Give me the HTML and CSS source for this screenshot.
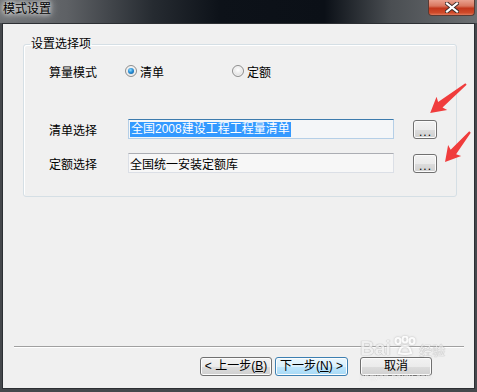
FILE: index.html
```html
<!DOCTYPE html>
<html lang="zh-CN">
<head>
    <meta charset="UTF-8">
    <title>模式设置</title>
    <link rel="stylesheet" href="styles.css">
</head>
<body>
<div class="window">
    <div class="titlebar">
        <span class="title">模式设置</span>
        <span class="close">
            <svg width="14" height="11" viewBox="0 0 14 11">
                <path d="M2 1.5 L12 9.5 M12 1.5 L2 9.5" stroke="#3a2a28" stroke-width="4" stroke-linecap="square"/>
                <path d="M2 1.5 L12 9.5 M12 1.5 L2 9.5" stroke="#ffffff" stroke-width="2.2" stroke-linecap="square"/>
            </svg>
        </span>
    </div>
    <div class="client">
        <fieldset class="group">
            <legend>设置选择项</legend>
            <div class="group-body">
                <div class="row mode-row">
                    <span class="label">算量模式</span>
                    <span class="radio checked"><i></i>清单</span>
                    <span class="radio"><i></i>定额</span>
                </div>
                <div class="row list-row">
                    <span class="label">清单选择</span>
                    <div class="field focus"><span class="sel">全国2008建设工程工程量清单</span></div>
                    <button class="browse">...</button>
                </div>
                <div class="row quota-row">
                    <span class="label">定额选择</span>
                    <div class="field">全国统一安装定额库</div>
                    <button class="browse">...</button>
                </div>
            </div>
        </fieldset>
        <div class="spacer"></div>
        <div class="sep"></div>
        <div class="buttons">
            <button class="btn">&lt; 上一步(<u>B</u>)</button>
            <button class="btn hot">下一步(<u>N</u>) &gt;</button>
            <button class="btn cancel">取消</button>
        </div>
    </div>

    <!-- 标注箭头 -->
    <svg class="arrows" width="477" height="392">
        <polygon transform="translate(466,84) rotate(141.1)" points="0,-1 33,-3.5 31,-8.5 46,0 31,8.5 33,3.5 0,1" fill="#f03c3c"/>
        <polygon transform="translate(470,132) rotate(129.8)" points="0,-1 26,-3.5 24,-8.5 39,0 24,8.5 26,3.5 0,1" fill="#f03c3c"/>
    </svg>

    <div class="watermark">
        <div class="wm-top">
            <span class="wm-bai">Bai</span>
            <svg class="wm-paw" width="26" height="20" viewBox="0 0 26 20">
                <g fill="none" stroke="#ffffff" stroke-width="2.2">
                    <ellipse cx="6" cy="5" rx="2.5" ry="3"/>
                    <ellipse cx="13" cy="3.5" rx="2.5" ry="3"/>
                    <ellipse cx="20" cy="5" rx="2.5" ry="3"/>
                    <path d="M7 17 Q8 10 13 10 Q18 10 19 17 Q13 19 7 17 Z"/>
                </g>
            </svg>
            <span class="wm-jy">经验</span>
        </div>
        <div class="wm-url">jingyan.baidu.com</div>
    </div>
</div>
</body>
</html>
```

FILE: styles.css
```css
*{
    margin: 0;
    padding: 0;
    box-sizing: border-box;
}
html,body{
    width: 100%;
    height: 100%;
}
body{
    font-family: "Liberation Sans", "Noto Sans CJK SC", sans-serif;
    font-size: 12px;
    color: #000;
}
.window{
    position: relative;
    width: 477px;
    height: 392px;
    background: #45484c;
    padding: 0 2px 3px 2px;
    display: flex;
    flex-direction: column;
    overflow: hidden;
}
.titlebar{
    height: 23px;
    margin: 0 -2px;
    display: flex;
    justify-content: space-between;
    align-items: flex-start;
    background: linear-gradient(to right, #717477 0%, #5e6165 14%, #262b31 32%, #0d1219 46%, #0b1017 68%, #4a4e52 82%, #6c6f72 100%);
}
.titlebar .title{
    padding: 2px 0 0 3px;
    line-height: 14px;
    color: #000;
    text-shadow: 0 0 4px #fff, 0 0 8px rgba(255,255,255,.8), 0 0 12px rgba(255,255,255,.5);
}
.titlebar .close{
    width: 47px;
    height: 16px;
    margin-right: 2px;
    border: 1px solid #5a3a33;
    border-top: none;
    border-radius: 0 0 4px 4px;
    background: linear-gradient(#e9a18f 0%, #d9775f 40%, #c2371c 55%, #cf4a2a 85%, #e0795b 100%);
    display: flex;
    justify-content: center;
    align-items: center;
}
.client{
    flex: 1;
    background: #f0f0f0;
    border: 1px solid #2c2f33;
    display: flex;
    flex-direction: column;
}
.group{
    margin: 13px 17px 0 20px;
    border: 1px solid #d5dfe5;
    border-radius: 3px;
    box-shadow: inset 1px 1px 0 #fff;
    padding: 0;
}
.group legend{
    margin-left: 6px;
    padding: 0 1px;
    line-height: 14px;
}
.group-body{
    padding: 10px 0 23px 25px;
}
.row{
    display: flex;
    align-items: center;
    height: 20px;
}
.list-row{
    margin-top: 38px;
}
.quota-row{
    margin-top: 14px;
}
.row .label{
    width: 79px;
    flex: none;
}
.mode-row .label{
    width: 76px;
}
.radio{
    display: flex;
    align-items: center;
    gap: 3px;
    width: 107px;
}
.radio i{
    width: 12px;
    height: 12px;
    border-radius: 50%;
    border: 1px solid #8f8f8f;
    background: radial-gradient(circle at 50% 40%, #ffffff 0%, #e9e9e9 50%, #cfcfcf 100%);
    box-shadow: inset 0 0 0 1px #f4f4f4;
    display: flex;
    justify-content: center;
    align-items: center;
}
.radio.checked i::after{
    content: "";
    width: 6px;
    height: 6px;
    border-radius: 50%;
    background: radial-gradient(circle at 40% 35%, #8fdcff 0%, #2a8fd6 45%, #0b4f8f 100%);
}
.field{
    width: 266px;
    height: 20px;
    background: #f7f7f7;
    border: 1px solid #dbdfe6;
    border-top-color: #abadb3;
    padding-left: 1px;
    display: flex;
    align-items: center;
    white-space: nowrap;
}
.field.focus{
    border-color: #b5cfe7;
    border-top-color: #3d7bad;
    background: #f4f6f8;
}
.field .sel{
    background: #3399ff;
    color: #fff;
    line-height: 15px;
    padding: 0 1px;
}
.browse{
    width: 24px;
    height: 19px;
    margin-left: 19px;
    border: 1px solid #707070;
    border-radius: 3px;
    background: linear-gradient(#f2f2f2 0%, #ebebeb 50%, #dddddd 50%, #cfcfcf 100%);
    box-shadow: inset 0 0 0 1px #fcfcfc;
    font-family: "Liberation Sans", sans-serif;
    font-size: 12px;
    letter-spacing: 1px;
    line-height: 22px;
    padding-left: 1px;
}
.spacer{
    flex: 1;
}
.sep{
    margin: 0 10px 0 11px;
    border-top: 1px solid #a0a0a0;
    border-bottom: 1px solid #fff;
}
.buttons{
    display: flex;
    justify-content: flex-end;
    gap: 3px;
    margin: 9px 42px 12px 0;
}
.btn{
    width: 72px;
    height: 19px;
    border: 1px solid #707070;
    border-radius: 3px;
    background: linear-gradient(#f2f2f2 0%, #ebebeb 50%, #dddddd 50%, #cfcfcf 100%);
    box-shadow: inset 0 0 0 1px #fcfcfc;
    font-family: "Liberation Sans", "Noto Sans CJK SC", sans-serif;
    font-size: 12px;
    line-height: 15px;
    color: #000;
}
.btn.hot{
    width: 73px;
    border-color: #3c7fb1;
    background: linear-gradient(#eaf6fd 0%, #d9f0fc 50%, #bee6fd 50%, #a7d9f5 100%);
}
.btn.cancel{
    margin-left: 9px;
}
.btn u{
    text-decoration: underline;
}
.arrows{
    position: absolute;
    left: 0;
    top: 0;
    pointer-events: none;
}
.watermark{
    position: absolute;
    left: 360px;
    top: 336px;
    width: 90px;
    color: rgba(255,255,255,.85);
    pointer-events: none;
    opacity: .75;
}
.wm-top{
    display: flex;
    align-items: flex-end;
    height: 22px;
}
.wm-bai{
    font-family: "Liberation Sans", sans-serif;
    font-weight: bold;
    font-size: 20px;
    line-height: 20px;
    text-shadow: 0 0 1px #999, 0 0 1px #999;
}
.wm-paw{
    margin: 0 1px 2px 1px;
    filter: drop-shadow(0 0 1px #aaa);
}
.wm-jy{
    font-family: "Noto Sans CJK SC", sans-serif;
    font-size: 13px;
    line-height: 16px;
    text-shadow: 0 0 1px #999, 0 0 1px #999;
}
.wm-url{
    font-family: "Liberation Sans", sans-serif;
    font-size: 8px;
    line-height: 8px;
    margin-top: 15px;
    letter-spacing: .5px;
    text-shadow: 0 0 1px #bbb;
}
```
